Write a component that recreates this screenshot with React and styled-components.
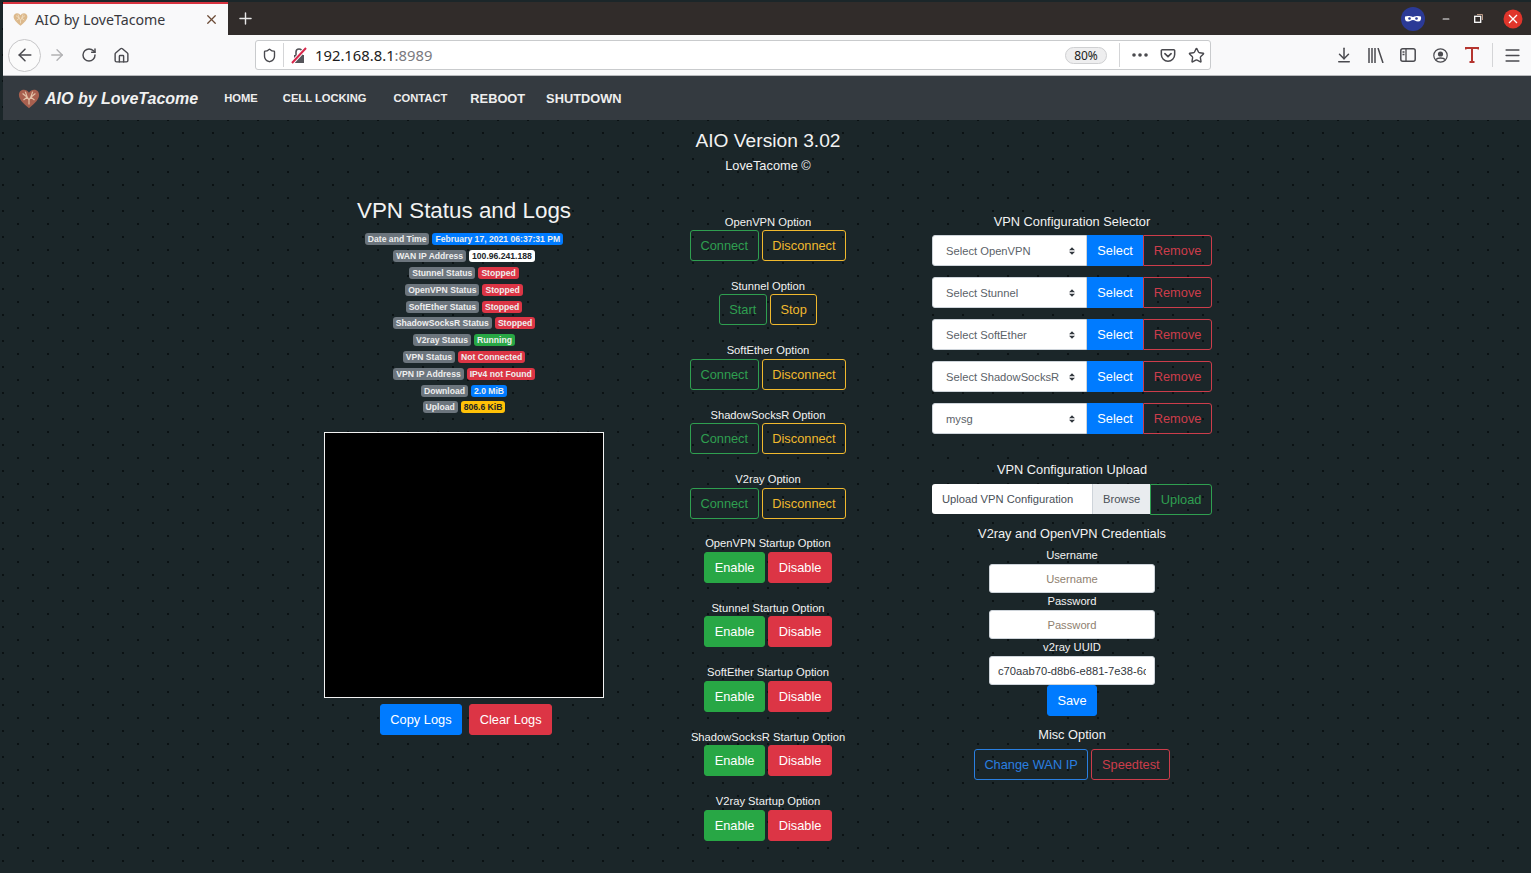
import styled, { createGlobalStyle } from "styled-components";
import { ArrowLeft, ArrowRight, RotateCw, Home, Shield, Star, ArrowDownToLine, X, Plus, Menu, Minus } from "lucide-react";

const colors = {
    blue: "#007bff",
    green: "#28a745",
    red: "#dc3545",
    yellow: "#ffc107",
    grey: "#6c757d",
    nav: "#343a40",
    icon: "#4a4a4f",
    outlineBlue: "#2a7fe0",
    outlineGreen: "#2f9f50",
    outlineRed: "#cc3d4b",
    outlineYellow: "#f0b92e",
};

const arrows = "data:image/svg+xml,%3csvg xmlns='http://www.w3.org/2000/svg' width='6' height='8' viewBox='0 0 4 5'%3e%3cpath fill='%23343a40' d='M2 0L0 2h4zm0 5L0 3h4z'/%3e%3c/svg%3e";

const GlobalStyle = createGlobalStyle`
    html, body {
        margin: 0;
        height: 100%;
        overflow: hidden;
    }
    body {
        font-family: "Liberation Sans", Arial, sans-serif;
        font-size: 12.8px;
        color: #f2f2f2;
        background-color: #1b2629;
        background-image:
            radial-gradient(circle at 3px 3px, #0a1113 0.7px, transparent 1.1px),
            radial-gradient(circle at 18px 16px, #0a1113 0.7px, transparent 1.1px);
        background-size: 30px 26px;
    }
`;

const Window = styled.div`
    padding-left: 3px;
`;

const TabBar = styled.div`
    display: flex;
    align-items: flex-end;
    height: 35px;
    padding-top: 2px;
    box-sizing: border-box;
    background: linear-gradient(#1b2629 2px, #312c2a 2px);
`;

const Tab = styled.div`
    display: flex;
    align-items: center;
    width: 225px;
    height: 33px;
    box-sizing: border-box;
    padding: 0 9px 0 10px;
    background: #f9f9fa;
    border-top: 2px solid #d7333f;
    color: #38383d;
    font-family: "Noto Sans", sans-serif;
    font-size: 14.2px;
`;

const TabTitle = styled.span`
    flex: 1;
    margin-left: 7px;
`;

const NewTab = styled.div`
    display: flex;
    align-items: center;
    justify-content: center;
    width: 34px;
    height: 33px;
    color: #e8e8e8;
`;

const WindowControls = styled.div`
    display: flex;
    align-items: center;
    height: 33px;
    margin-left: auto;
`;

const WindowSlot = styled.div`
    display: flex;
    align-items: center;
    justify-content: center;
    width: ${props => props.width || 33}px;
    color: #f4f4f4;
`;

const Toolbar = styled.div`
    display: flex;
    align-items: center;
    height: 41px;
    padding-left: 5px;
    box-sizing: border-box;
    background: #f9f9fa;
    border-bottom: 1px solid #b8babd;
`;

const BackButton = styled.div`
    display: flex;
    align-items: center;
    justify-content: center;
    flex: none;
    width: 33px;
    height: 33px;
    box-sizing: border-box;
    border: 1px solid #c6c6c8;
    border-radius: 50%;
    background: #fbfbfb;
    color: ${colors.icon};
`;

const IconSlot = styled.div`
    display: flex;
    align-items: center;
    justify-content: center;
    flex: none;
    box-sizing: border-box;
    width: ${props => props.width || 32}px;
    padding-left: ${props => props.shift || 0}px;
    color: ${props => props.color || colors.icon};
`;

const AddressBar = styled.div`
    display: flex;
    align-items: center;
    flex: none;
    width: 956px;
    height: 30px;
    margin: 0 117px 0 118px;
    box-sizing: border-box;
    background: #fff;
    border: 1px solid #c9cbcd;
    border-radius: 3px;
    font-family: "Noto Sans", sans-serif;
    font-size: 14.8px;
    color: #1c1c20;
`;

const BarDivider = styled.span`
    flex: none;
    width: 1px;
    height: 24px;
    background: #d4d5d7;
`;

const Url = styled.div`
    flex: 1;
    margin-left: 2px;
    span {
        color: #7a7a80;
    }
`;

const ZoomPill = styled.div`
    width: 42px;
    height: 17px;
    margin-right: 12px;
    box-sizing: border-box;
    border: 1px solid #cfd0d2;
    border-radius: 9px;
    background: #eeeeef;
    font-size: 12px;
    line-height: 15px;
    text-align: center;
`;

const Navbar = styled.nav`
    display: flex;
    align-items: center;
    height: 44px;
    padding-left: 15px;
    background: ${colors.nav};
`;

const Brand = styled.div`
    display: flex;
    align-items: center;
    gap: 5px;
    margin-right: 13px;
    padding-top: 1px;
    font-size: 16px;
    font-weight: bold;
    font-style: italic;
    color: #f1f1f1;
`;

const NavLink = styled.a`
    margin-left: ${props => props.gap || 0}px;
    font-size: ${props => props.size || 11.2}px;
    font-weight: bold;
    color: #eeeeee;
`;

const Page = styled.main`
    padding: 9px 0 0 2px;
    text-align: center;
`;

const PageTitle = styled.h4`
    margin: 0;
    font-size: 19.2px;
    font-weight: normal;
    line-height: 23px;
`;

const PageCredit = styled.p`
    margin: 4px 0 0;
    line-height: 19px;
`;

const Columns = styled.div`
    display: grid;
    grid-template-columns: repeat(3, 304px);
    justify-content: center;
    margin-top: 22px;
`;

const LeftColumn = styled.section`
    display: flex;
    flex-direction: column;
    align-items: center;
`;

const SideColumn = styled.section`
    display: flex;
    flex-direction: column;
    align-items: center;
    padding-top: ${props => props.top}px;
`;

const LogsHeading = styled.h3`
    margin: 0 0 7px;
    font-size: 22.4px;
    font-weight: normal;
    line-height: 27px;
`;

const BadgeRow = styled.div`
    display: flex;
    align-items: center;
    justify-content: center;
    gap: 3px;
    height: 16.8px;
`;

const Badge = styled.span`
    padding: 0 3px;
    height: 12px;
    border-radius: 3px;
    font-size: 8.6px;
    font-weight: bold;
    line-height: 12px;
    white-space: nowrap;
    background: ${props => props.bg || colors.grey};
    color: ${props => props.fg || "#eeeeee"};
`;

const LogBox = styled.div`
    width: 280px;
    height: 266px;
    margin-top: 16px;
    box-sizing: border-box;
    background: #000;
    border: 1px solid #f2f2f2;
`;

const LogActions = styled.div`
    display: flex;
    gap: 7px;
    margin-top: 6px;
    padding-left: 4px;
`;

const Button = styled.button`
    height: 31px;
    padding: 0 9.6px;
    box-sizing: border-box;
    font-family: inherit;
    font-size: 12.8px;
    white-space: nowrap;
    border: 1px solid ${props => props.color};
    border-radius: 3px;
    background: ${props => props.$outline ? "transparent" : props.color};
    color: ${props => props.$outline ? props.color : "#fff"};
`;

const OptionGroup = styled.div`
    display: flex;
    flex-direction: column;
    align-items: center;
    height: 64.4px;
`;

const OptionLabel = styled.div`
    font-size: 11.2px;
    line-height: 15.6px;
`;

const ButtonPair = styled.div`
    display: flex;
    gap: 3px;
`;

const SectionTitle = styled.div`
    margin-top: ${props => props.top || 0}px;
    margin-bottom: ${props => props.bottom || 0}px;
    font-size: 12.8px;
    line-height: 16px;
`;

const InputGroup = styled.div`
    display: flex;
    width: 280px;
    height: 31px;
    margin-bottom: ${props => props.bottom || 0}px;
`;

const ConfigSelect = styled.select`
    flex: none;
    width: 155px;
    padding: 0 13px;
    border: 1px solid #ced4da;
    border-radius: 3px 0 0 3px;
    appearance: none;
    background: #fff url("${arrows}") no-repeat right 11px center;
    font-family: inherit;
    font-size: 11.2px;
    color: #5b6268;
`;

const JoinedButton = styled(Button)`
    flex: ${props => props.$grow ? 1 : "none"};
    padding: 0 ${props => props.$grow ? 0 : 9.6}px;
    border-radius: ${props => props.$last ? "0 3px 3px 0" : "0"};
`;

const FileInput = styled.div`
    display: flex;
    align-items: center;
    flex: 1;
    height: 30px;
    padding-left: 10px;
    box-sizing: border-box;
    background: #fff;
    border-radius: 3px 0 0 3px;
    font-size: 11.2px;
    color: #495057;
`;

const BrowseLabel = styled.span`
    display: flex;
    align-items: center;
    align-self: stretch;
    margin-left: auto;
    padding: 0 10px;
    background: #e9ecef;
    border-left: 1px solid #ced4da;
`;

const FieldLabel = styled.label`
    display: block;
    font-size: 11.2px;
    line-height: 17px;
`;

const TextField = styled.input`
    display: block;
    width: 166px;
    height: 29px;
    padding: 0 8px;
    box-sizing: border-box;
    border: 1px solid #ced4da;
    border-radius: 3px;
    background: #fff;
    font-family: inherit;
    font-size: 11.2px;
    color: #33383d;
    text-align: ${props => props.$align || "center"};

    &::placeholder {
        color: #8f7f70;
        opacity: 1;
    }
`;

const MiscRow = styled.div`
    display: flex;
    gap: 3px;
`;

const statusRows = [
    ["Date and Time", "February 17, 2021 06:37:31 PM", colors.blue],
    ["WAN IP Address", "100.96.241.188", "#fff", "#212529"],
    ["Stunnel Status", "Stopped", colors.red],
    ["OpenVPN Status", "Stopped", colors.red],
    ["SoftEther Status", "Stopped", colors.red],
    ["ShadowSocksR Status", "Stopped", colors.red],
    ["V2ray Status", "Running", colors.green],
    ["VPN Status", "Not Connected", colors.red],
    ["VPN IP Address", "IPv4 not Found", colors.red],
    ["Download", "2.0 MiB", colors.blue],
    ["Upload", "806.6 KiB", colors.yellow, "#212529"],
];

const connectOptions = [
    ["OpenVPN Option", "Connect", "Disconnect"],
    ["Stunnel Option", "Start", "Stop"],
    ["SoftEther Option", "Connect", "Disconnect"],
    ["ShadowSocksR Option", "Connect", "Disconnect"],
    ["V2ray Option", "Connect", "Disconnect"],
];

const startupOptions = ["OpenVPN", "Stunnel", "SoftEther", "ShadowSocksR", "V2ray"];

const selectors = ["Select OpenVPN", "Select Stunnel", "Select SoftEther", "Select ShadowSocksR", "mysg"];

const Heart = ({size, fill, vein}) => (
    <svg width={size} height={size} viewBox="0 0 24 22">
        <path d="M12 21 C5 15 1 11 1 6.5 C1 3 3.6 1 6.5 1 C8.8 1 10.8 2.2 12 4.2 C13.2 2.2 15.2 1 17.5 1 C20.4 1 23 3 23 6.5 C23 11 19 15 12 21Z" fill={fill}/>
        <path d="M5 5l5 4-4 3M19 5l-5 4 4 3M10 9l2 3 2-3M12 12v5M8 3l2 6M16 3l-2 6" fill="none" stroke={vein} strokeWidth="1.3"/>
    </svg>
);

const LockIcon = () => (
    <svg width="16" height="17" viewBox="0 0 16 17">
        <path d="M3 8h10v8H3z" fill="#55555a"/>
        <path d="M5 8V5a3 3 0 0 1 6 0v3" fill="none" stroke="#55555a" strokeWidth="1.6"/>
        <path d="M1 16L15 1" stroke="#fff" strokeWidth="4"/>
        <path d="M1 16L15 1" stroke="#d7264a" strokeWidth="2"/>
    </svg>
);

const PocketIcon = () => (
    <svg width="16" height="15" viewBox="0 0 18 16">
        <path d="M2.5 1.5h13a1 1 0 0 1 1 1V7a7.5 7.5 0 0 1-15 0V2.5a1 1 0 0 1 1-1z" fill="none" stroke="currentColor" strokeWidth="1.7"/>
        <path d="M5.5 6L9 9.3 12.5 6" fill="none" stroke="currentColor" strokeWidth="1.9" strokeLinecap="round"/>
    </svg>
);

const LibraryIcon = () => (
    <svg width="16" height="15" viewBox="0 0 16 15">
        <path d="M1 0v15M4 0v15M7 0v15M10 0l5 15" fill="none" stroke="currentColor" strokeWidth="1.5"/>
    </svg>
);

const SidebarIcon = () => (
    <svg width="16" height="14" viewBox="0 0 16 14">
        <rect x="0.8" y="0.8" width="14.4" height="12.4" rx="2" fill="none" stroke="currentColor" strokeWidth="1.5"/>
        <path d="M6 1v12M2.5 4H4.5M2.5 6.5H4.5" fill="none" stroke="currentColor" strokeWidth="1.3"/>
    </svg>
);

const AccountIcon = () => (
    <svg width="15" height="15" viewBox="0 0 15 15">
        <circle cx="7.5" cy="7.5" r="6.7" fill="none" stroke="currentColor" strokeWidth="1.2"/>
        <circle cx="7.5" cy="6" r="2.6" fill="currentColor"/>
        <path d="M3 11.5c1.5-2 7.5-2 9 0" fill="none" stroke="currentColor" strokeWidth="1.5"/>
    </svg>
);

const TypeIcon = () => (
    <svg width="14" height="16" viewBox="0 0 14 16">
        <path d="M0.5 2.5V1h13v1.5M7 1v14M4.5 15h5" fill="none" stroke="#b5352f" strokeWidth="2"/>
    </svg>
);

const MaskIcon = () => (
    <svg width="24" height="24" viewBox="0 0 24 24">
        <circle cx="12" cy="12" r="12" fill="#2b3a96"/>
        <path d="M4 9.5c3-1 5-.5 8 .5 3-1 5-1.5 8-.5 .5 3-.5 5-3 5-2.5 0-3-1.5-5-1.5s-2.5 1.5-5 1.5c-2.5 0-3.5-2-3-5z" fill="#fff"/>
        <circle cx="8.5" cy="11.5" r="1.3" fill="#2b3a96"/>
        <circle cx="15.5" cy="11.5" r="1.3" fill="#2b3a96"/>
    </svg>
);

const RestoreIcon = () => (
    <svg width="9" height="9" viewBox="0 0 9 9">
        <rect x="0.7" y="2.3" width="6" height="6" fill="none" stroke="#fff" strokeWidth="1.3"/>
        <path d="M3 .5h5.5V6" fill="none" stroke="#c9a58f" strokeWidth="0.9"/>
    </svg>
);

const CloseIcon = () => (
    <svg width="20" height="20" viewBox="0 0 20 20">
        <circle cx="10" cy="10" r="9.5" fill="#e0352b"/>
        <path d="M6 6l8 8M14 6l-8 8" stroke="#fff" strokeWidth="1.3"/>
    </svg>
);

const BrowserChrome = () => (
    <>
        <TabBar>
            <Tab>
                <Heart size={15} fill="#dcb98c" vein="#f3e2c8"/>
                <TabTitle>AIO by LoveTacome</TabTitle>
                <X size={15} color="#6b4a35" strokeWidth={2}/>
            </Tab>
            <NewTab><Plus size={19} strokeWidth={1.8}/></NewTab>
            <WindowControls>
                <WindowSlot><MaskIcon/></WindowSlot>
                <WindowSlot><Minus size={10} strokeWidth={2.5}/></WindowSlot>
                <WindowSlot><RestoreIcon/></WindowSlot>
                <WindowSlot width={36}><CloseIcon/></WindowSlot>
            </WindowControls>
        </TabBar>
        <Toolbar>
            <BackButton><ArrowLeft size={20} strokeWidth={1.8}/></BackButton>
            <IconSlot color="#b1b1b3"><ArrowRight size={18} strokeWidth={1.8}/></IconSlot>
            <IconSlot><RotateCw size={16} strokeWidth={2.2}/></IconSlot>
            <IconSlot><Home size={17} strokeWidth={2}/></IconSlot>
            <AddressBar>
                <IconSlot width={27}><Shield size={15} strokeWidth={2.2}/></IconSlot>
                <BarDivider/>
                <IconSlot width={29}><LockIcon/></IconSlot>
                <Url>192.168.8.1<span>:8989</span></Url>
                <ZoomPill>80%</ZoomPill>
                <BarDivider/>
                <IconSlot width={34} shift={6}>
                    <svg width="16" height="4" viewBox="0 0 16 4" fill="currentColor">
                        <circle cx="2" cy="2" r="1.8"/><circle cx="8" cy="2" r="1.8"/><circle cx="14" cy="2" r="1.8"/>
                    </svg>
                </IconSlot>
                <IconSlot width={28}><PocketIcon/></IconSlot>
                <IconSlot width={28}><Star size={17} strokeWidth={2}/></IconSlot>
            </AddressBar>
            <IconSlot><ArrowDownToLine size={18} strokeWidth={2}/></IconSlot>
            <IconSlot><LibraryIcon/></IconSlot>
            <IconSlot><SidebarIcon/></IconSlot>
            <IconSlot><AccountIcon/></IconSlot>
            <IconSlot><TypeIcon/></IconSlot>
            <IconSlot width={4}/>
            <BarDivider/>
            <IconSlot width={38}><Menu size={19} strokeWidth={2}/></IconSlot>
        </Toolbar>
    </>
);

const StatusPanel = () => (
    <LeftColumn>
        <LogsHeading>VPN Status and Logs</LogsHeading>
        {statusRows.map(([label, value, bg, fg]) => (
            <BadgeRow key={label}>
                <Badge>{label}</Badge>
                <Badge bg={bg} fg={fg}>{value}</Badge>
            </BadgeRow>
        ))}
        <LogBox/>
        <LogActions>
            <Button color={colors.blue}>Copy Logs</Button>
            <Button color={colors.red}>Clear Logs</Button>
        </LogActions>
    </LeftColumn>
);

const OptionsPanel = () => (
    <SideColumn top={17.5}>
        {connectOptions.map(([label, on, off]) => (
            <OptionGroup key={label}>
                <OptionLabel>{label}</OptionLabel>
                <ButtonPair>
                    <Button $outline color={colors.outlineGreen}>{on}</Button>
                    <Button $outline color={colors.outlineYellow}>{off}</Button>
                </ButtonPair>
            </OptionGroup>
        ))}
        {startupOptions.map(name => (
            <OptionGroup key={name}>
                <OptionLabel>{name} Startup Option</OptionLabel>
                <ButtonPair>
                    <Button color={colors.green}>Enable</Button>
                    <Button color={colors.red}>Disable</Button>
                </ButtonPair>
            </OptionGroup>
        ))}
    </SideColumn>
);

const ConfigPanel = () => (
    <SideColumn top={17}>
        <SectionTitle bottom={5}>VPN Configuration Selector</SectionTitle>
        {selectors.map(name => (
            <InputGroup key={name} bottom={11}>
                <ConfigSelect defaultValue={name}><option>{name}</option></ConfigSelect>
                <JoinedButton $grow color={colors.blue}>Select</JoinedButton>
                <JoinedButton $last $outline color={colors.outlineRed}>Remove</JoinedButton>
            </InputGroup>
        ))}
        <SectionTitle top={17} bottom={6}>VPN Configuration Upload</SectionTitle>
        <InputGroup>
            <FileInput>
                Upload VPN Configuration
                <BrowseLabel>Browse</BrowseLabel>
            </FileInput>
            <JoinedButton $last $outline color={colors.outlineGreen}>Upload</JoinedButton>
        </InputGroup>
        <SectionTitle top={11} bottom={5}>V2ray and OpenVPN Credentials</SectionTitle>
        <FieldLabel>Username</FieldLabel>
        <TextField placeholder="Username"/>
        <FieldLabel>Password</FieldLabel>
        <TextField placeholder="Password"/>
        <FieldLabel>v2ray UUID</FieldLabel>
        <TextField readOnly $align="left" value="c70aab70-d8b6-e881-7e38-6c1f0a9d2b44"/>
        <Button color={colors.blue}>Save</Button>
        <SectionTitle top={11} bottom={6}>Misc Option</SectionTitle>
        <MiscRow>
            <Button $outline color={colors.outlineBlue}>Change WAN IP</Button>
            <Button $outline color={colors.outlineRed}>Speedtest</Button>
        </MiscRow>
    </SideColumn>
);

const App = () => {
    return (
        <Window>
            <GlobalStyle/>
            <BrowserChrome/>
            <Navbar>
                <Brand>
                    <Heart size={22} fill="#a8604f" vein="#e3c2a8"/>
                    AIO by LoveTacome
                </Brand>
                <NavLink gap={13}>HOME</NavLink>
                <NavLink gap={25}>CELL LOCKING</NavLink>
                <NavLink gap={27}>CONTACT</NavLink>
                <NavLink gap={23} size={12.8}>REBOOT</NavLink>
                <NavLink gap={21} size={12.8}>SHUTDOWN</NavLink>
            </Navbar>
            <Page>
                <PageTitle>AIO Version 3.02</PageTitle>
                <PageCredit>LoveTacome ©</PageCredit>
                <Columns>
                    <StatusPanel/>
                    <OptionsPanel/>
                    <ConfigPanel/>
                </Columns>
            </Page>
        </Window>
    );
}

export default App;
